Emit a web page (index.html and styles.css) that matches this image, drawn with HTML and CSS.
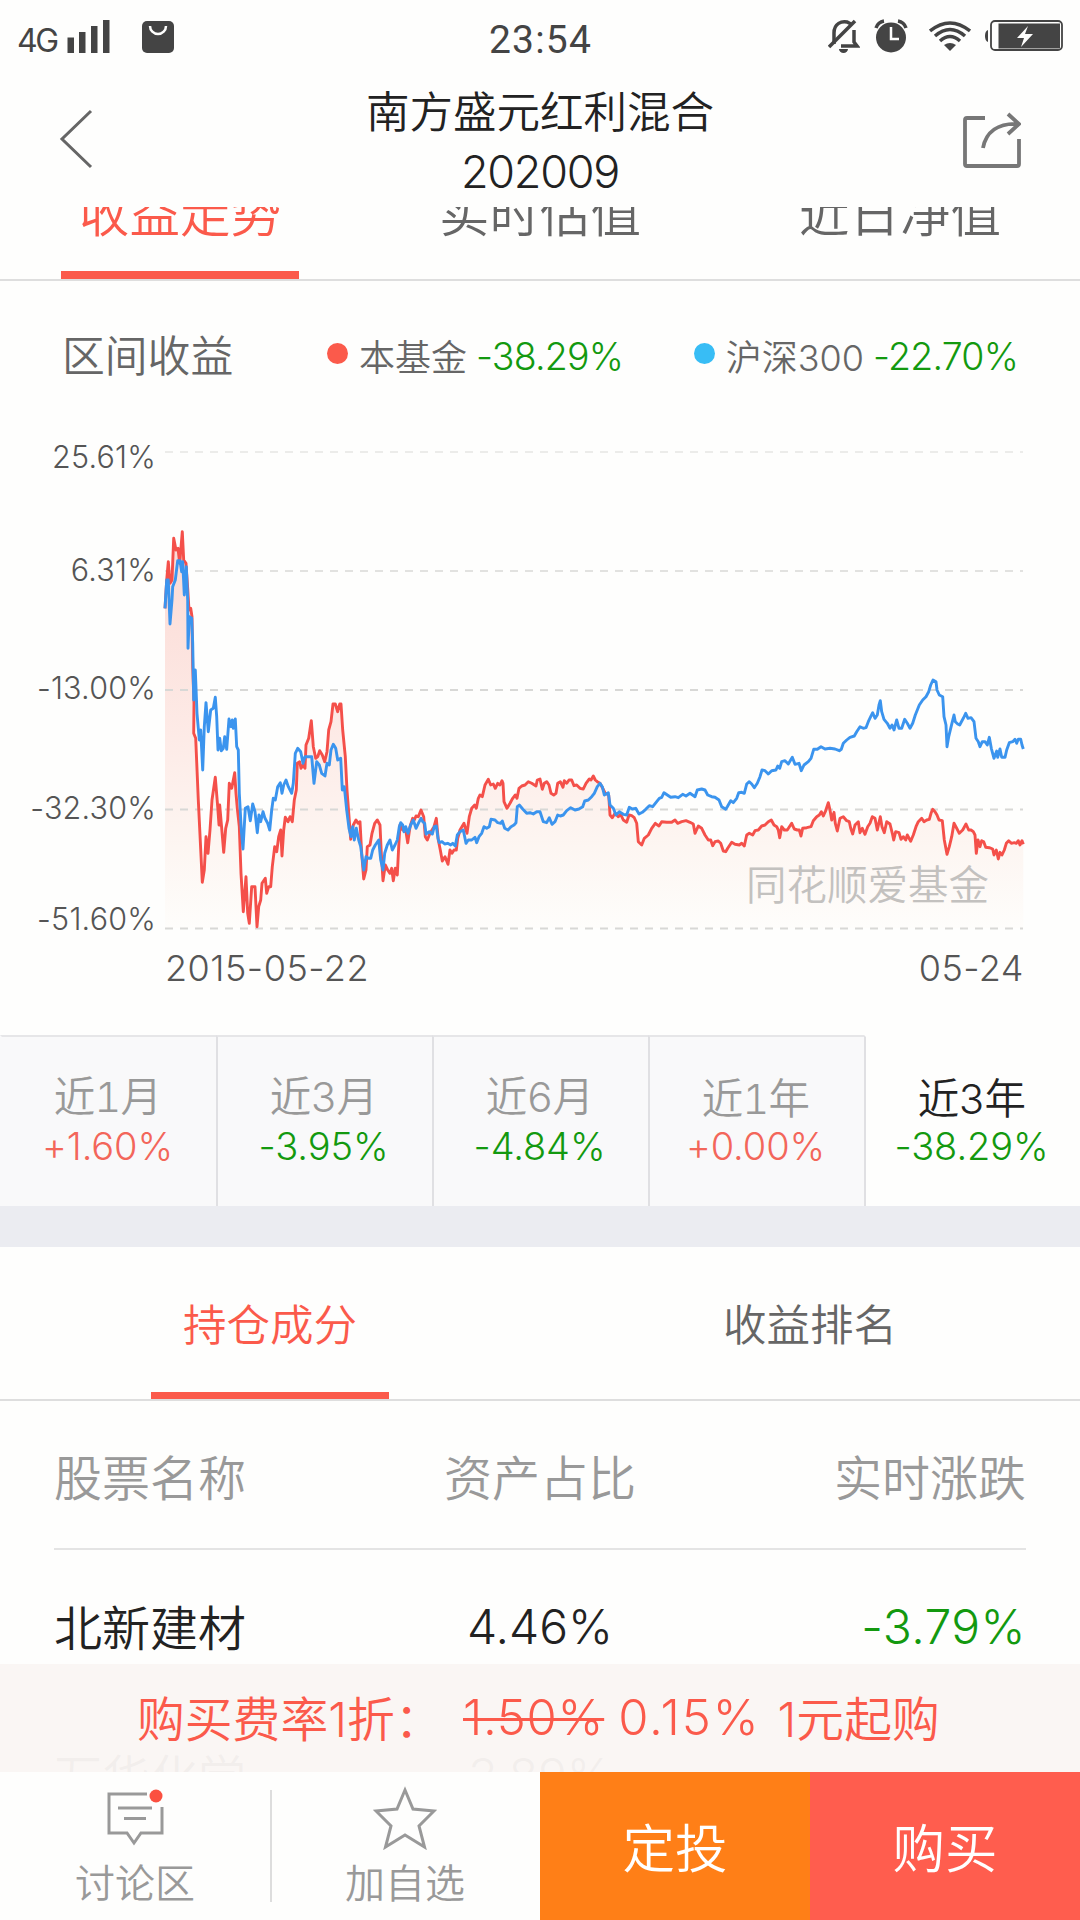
FILE: index.html
```html
<!DOCTYPE html>
<html lang="zh-CN">
<head>
<meta charset="utf-8">
<title>南方盛元红利混合</title>
<link rel="stylesheet" href="styles.css">
</head>
<body>
<div class="app">
  <header class="top">
    <div class="status">
      <div class="status-left">
        <span class="net">4G</span>
        <svg class="signal" width="44" height="34" viewBox="0 0 44 34"><path d="M0.5 18.500h6.500v15.500H0.500zM12 13h6.500v21H12zM24 7h6.500v27H24zM36 1h6.500v33H36z"/></svg>
        <svg class="bag" width="32" height="32" viewBox="0 0 32 32"><rect width="32" height="32" rx="5"/><path class="knock" d="M8 5a8 8 0 0 0 16 0"/></svg>
      </div>
      <span class="clock">23:54</span>
      <div class="status-right">
        <svg width="32" height="34" viewBox="0 0 32 34"><g class="line"><path d="M6 25V14C6 4 14 2 19 3l4 2M26 11v12l3 4H13"/><path d="M1 28 27 2"/></g><path d="M11 30h9a4.500 4 0 0 1-9 0z"/></svg>
        <svg width="36" height="34" viewBox="0 0 36 34"><circle cx="18" cy="18.500" r="15"/><path class="line" d="M3 9Q5 3 11 2M33 9Q31 3 25 2"/><path class="knock" d="M18 8v12h8"/></svg>
        <svg width="42" height="32" viewBox="0 0 42 32"><path class="line" d="M1 11Q21-5 41 11M6 16Q21 3 36 16M11 21Q21 12 31 21"/><path d="M15 25q6-4 12 0l-6 6z"/></svg>
        <svg width="79" height="32" viewBox="0 0 79 32"><path d="M3 10v12q-3-1-3-6t3-6z"/><rect class="shell" x="6" y="1" width="71" height="29" rx="4"/><rect x="13.500" y="3.500" width="61.500" height="25"/><path class="bolt" d="M43 6 32 18h7l-3 9 12-13h-8z"/></svg>
      </div>
    </div>
    <div class="titlebar">
      <svg class="back" width="36" height="60" viewBox="0 0 36 60"><path d="M32 2 3 30 32 58"/></svg>
      <h1 class="title">南方盛元红利混合<span class="code">202009</span></h1>
      <svg class="share" width="60" height="60" viewBox="0 0 60 60"><path d="M24 7H6Q4 7 4 9V53Q4 55 6 55H56Q58 55 58 53V28"/><path d="M22 37C25 21 37 12 57 13M47 3 58 13 47 23"/></svg>
    </div>
  </header>

  <nav class="tabs">
    <span class="tab active">收益走势</span><span class="tab">实时估值</span><span class="tab">近日净值</span>
  </nav>

  <section class="legend">
    <span class="legend-title">区间收益</span>
    <span class="item"><i class="dot fund"></i><span class="name">本基金</span><span class="down">-38.29%</span></span>
    <span class="item"><i class="dot index"></i><span class="name">沪深300</span><span class="down">-22.70%</span></span>
  </section>

  <svg class="chart" viewBox="0 420 1080 600" width="1080" height="600">
    <defs><linearGradient id="fade" gradientUnits="userSpaceOnUse" x1="0" y1="530" x2="0" y2="928">
      <stop offset="0" stop-color="#fbd9d3"/><stop offset=".5" stop-color="#fdeae6"/><stop offset=".8" stop-color="#fdf6f2"/><stop offset="1" stop-color="#fefdfb"/>
    </linearGradient></defs>
    <path id="area" fill="url(#fade)"/>
    <g class="grid"><path class="faint" d="M165 452H1023"/><path class="soft" d="M165 571H1023"/><path d="M165 690H1023M165 809.500H1023M165 928.500H1023"/></g>
    <path id="fund" class="series fund-line"/>
    <path id="index" class="series index-line"/>
    <g class="axis">
      <text x="156" y="468">25.61%</text>
      <text x="156" y="580.500">6.31%</text>
      <text x="156" y="699">-13.00%</text>
      <text x="156" y="819">-32.30%</text>
      <text x="156" y="929.500">-51.60%</text>
    </g>
    <text class="watermark" x="746" y="900">同花顺爱基金</text>
    <g class="dates">
      <text x="165" y="981">2015-05-22</text>
      <text class="end" x="1024" y="981">05-24</text>
    </g>
  </svg>

  <section class="periods">
    <div class="period"><b>近1月</b><span class="up">+1.60%</span></div>
    <div class="period"><b>近3月</b><span class="down">-3.95%</span></div>
    <div class="period"><b>近6月</b><span class="down">-4.84%</span></div>
    <div class="period year"><b>近1年</b><span class="up">+0.00%</span></div>
    <div class="period year selected"><b>近3年</b><span class="down">-38.29%</span></div>
  </section>

  <nav class="subtabs">
    <span class="subtab active">持仓成分</span><span class="subtab">收益排名</span>
  </nav>

  <section class="holdings">
    <div class="row head"><span>股票名称</span><span>资产占比</span><span>实时涨跌</span></div>
    <div class="row"><span>北新建材</span><span class="num">4.46%</span><span class="num down">-3.79%</span></div>
    <div class="row"><span>万华化学</span><span class="num">3.89%</span><span></span></div>
  </section>

  <footer class="bottom">
    <div class="promo"><span class="rate">购买费率1折：</span><s>1.50%</s><span class="now">0.15%</span><span>1元起购</span></div>
    <div class="actions">
      <div class="action">
        <svg width="60" height="60" viewBox="0 0 60 60"><path d="M42 8H4V47H22L29 57 36 47H57V21M13 22H47M19 32.500H41"/><circle cx="51" cy="10" r="6.500"/></svg>
        <span>讨论区</span>
      </div>
      <div class="action">
        <svg width="64" height="64" viewBox="0 0 64 64"><path d="M32 4 40 23 61 25 46 40 51.500 61 32 49 12.500 61 18 40 3 25 24 23Z"/></svg>
        <span>加自选</span>
      </div>
      <div class="button invest">定投</div>
      <div class="button buy">购买</div>
    </div>
  </footer>
</div>
<script src="chart.js"></script>
</body>
</html>
```
FILE: styles.css
```css
* { box-sizing: border-box; }
body { margin: 0; background: #fefefd; }
.app {
  width: 1080px; height: 1920px; overflow: hidden; position: relative;
  display: flex; flex-direction: column;
  background: #fefefd; color: #666;
  font-family: Inter, "Noto Sans CJK SC", sans-serif; font-weight: 350;
}
.up { color: #f3665a; }
.down { color: #13990f; }

/* Status and title */
.top { height: 207px; flex: none; background: #fefefd; z-index: 1; }
.status { height: 75px; padding: 0 16px 0 17px; display: grid; grid-template-columns: 1fr auto 1fr; align-items: center; color: #444; fill: #444; }
.status-left, .status-right { display: flex; align-items: center; }
.net { font-size: 32px; font-weight: 400; letter-spacing: -2.500px; width: 50px; padding-top: 5px; }
.signal { margin-top: -3px; }
.bag { margin: -1px 0 0 31px; }
.clock { font-family: Roboto, sans-serif; font-size: 39px; font-weight: 400; letter-spacing: 1.200px; padding-top: 5px; }
.status-right { justify-content: flex-end; gap: 14px; margin-top: -3px; }
.status-right svg:nth-child(2) { margin-left: -1px; margin-right: 6px; }
.line { fill: none; stroke: #444; stroke-width: 3.500; }
.knock { fill: none; stroke: #fefefd; stroke-width: 2.500; }
.shell { fill: none; stroke: #444; stroke-width: 1.800; }
.bolt { fill: #fefefd; }
.titlebar { display: flex; justify-content: space-between; padding: 6px 59px 0 59px; }
.back { margin-top: 28px; fill: none; stroke: #666; stroke-width: 3; }
.share { margin-top: 30px; fill: none; stroke: #777; stroke-width: 3.800; }
.title { margin: 0; padding: 1px 0 0 24px; font-size: 43.500px; font-weight: 350; line-height: 60px; color: #222; text-align: center; }
.code { display: block; font-size: 45px; font-weight: 300; letter-spacing: -1.300px; line-height: 60px; }

/* Chart section */
.tabs { height: 74px; flex: none; display: grid; grid-template-columns: repeat(3, 1fr); overflow: hidden; border-bottom: 2px solid #dedede; }
.tab { justify-self: center; width: 238px; height: 90px; margin-top: -18px; font-size: 50.500px; line-height: 50px; text-align: center; }
.tab.active, .subtab.active { color: #fb5a4b; border-bottom: 8px solid #fb5a4b; }
.legend { height: 139px; flex: none; padding: 9px 62px 0 62px; display: flex; align-items: center; }
.legend-title { width: 265px; font-size: 42.800px; margin-top: -5px; }
.item { display: flex; align-items: center; font-size: 36px; }
.item:last-child { margin-left: auto; }
.item .down { font-size: 37.500px; letter-spacing: -.8px; margin: 4px 0 0 9px; line-height: 50px; }
.dot { width: 21px; height: 21px; border-radius: 50%; margin: -3px 11px 0 0; }
.dot.fund { background: #fb5a4b; }
.dot.index { background: #38bdf5; }
.chart { flex: none; display: block; }
.grid { fill: none; stroke: #d8d8d6; stroke-width: 2; stroke-dasharray: 8 7; }
.faint { stroke: #ececea; }
.soft { stroke: #e2e2e0; }
.series { fill: none; stroke-width: 2.900; stroke-linejoin: round; }
.fund-line { stroke: #f4504a; }
.index-line { stroke: #3b94ee; }
.axis { font-size: 30.500px; font-weight: 300; letter-spacing: .2px; text-anchor: end; fill: #555; }
.watermark { font-size: 40.500px; fill: #c3c1bf; }
.dates { font-size: 36px; font-weight: 300; letter-spacing: .5px; fill: #555; }
.dates .end { text-anchor: end; }

/* Periods */
.periods { height: 212px; flex: none; margin-top: 15px; display: grid; grid-template-columns: repeat(5, 216px); border-bottom: 41px solid #ebecf1; }
.period { display: flex; flex-direction: column; align-items: center; padding: 36px 3px 0 0; background: #f9f9fa; border-top: 2px solid #e6e6e8; border-left: 2px solid #e0e0e3; color: #999; font-size: 38px; letter-spacing: -.1px; line-height: 49px; }
.period:first-child { border-left-color: transparent; }
.period b { font-size: 41.500px; font-weight: 350; letter-spacing: -.7px; line-height: 49px; font-variant-numeric: tabular-nums; }
.period.year { padding-top: 39px; }
.period.year b { line-height: 46px; }
.period.selected { background: none; border-top-color: transparent; }
.period.selected b { color: #222; }

/* Holdings */
.subtabs { height: 154px; flex: none; display: grid; grid-template-columns: 1fr 1fr; border-bottom: 2px solid #dedede; }
.subtab { justify-self: center; width: 238px; height: 152px; padding-top: 48px; font-size: 43.500px; line-height: 60px; text-align: center; }
.subtab.active { border-bottom-width: 7px; }
.holdings { padding: 0 54px; }
.row { height: 149px; display: grid; grid-template-columns: 1fr 1fr 1fr; align-items: center; font-size: 48px; color: #222; }
.row > :nth-child(2) { text-align: center; }
.row > :nth-child(3) { text-align: right; }
.row.head { padding-top: 1px; color: #999; border-bottom: 2px solid #e4e4e4; }
.row .num { padding-top: 3px; }
.row .num.down { color: #13990f; letter-spacing: .4px; }

/* Purchase bar */
.bottom { position: absolute; left: 0; right: 0; bottom: 0; }
.promo { height: 108px; display: flex; align-items: center; padding: 0 0 4px 137px; background: rgba(250, 246, 244, .965); color: #fb5a4b; font-size: 47.800px; }
.rate { width: 326px; white-space: nowrap; }
.promo s, .now { padding-top: 3px; font-size: 49px; letter-spacing: .7px; text-decoration-thickness: 3px; }
.now { margin: 0 17px 0 14px; letter-spacing: 1.900px; }
.actions { height: 148px; display: grid; grid-template-columns: repeat(4, 270px); background: #fefefd; }
.action { display: flex; flex-direction: column; align-items: center; justify-content: space-between; padding: 14px 0 8px; font-size: 40px; line-height: 56px; color: #999; }
.action svg { fill: none; stroke: #999; stroke-width: 3; }
.action circle { fill: #fb5040; stroke: none; }
.action + .action { background: linear-gradient(#ddd, #ddd) 0 18px / 2px 112px no-repeat; }
.button { display: grid; place-items: center; padding-bottom: 3px; color: #fff; font-size: 52.500px; }
.invest { background: #ff7f17; }
.buy { background: #ff5d4e; }
```
FILE: chart.js
```js
// Each batch holds points in thirds of a pixel, counted from its own origin.
const fund = [
  [150, 500, '45,325 50,240 55,185 60,250 66,240 71,115 78,150 84,145 89,190 97,95 101,180 108,190 113,265 117,330 122,325 126,350 128,500 132,610 131,700 137,715 145,900 157,1147 163,1110 168,1010 174,1060 180,990 186,900 196,832 203,920 207,975 209,915 215,985 221,1057 227,985 233,960 238,850 245,865 254,818 258,880 262,925 268,980 273,1120 280,1235 288,1130 293,1240 298,1270 305,1160 315,1160 321,1280 326,1220 332,1200 336,1150 346,1135 350,1180 356,1160 362,1160 367,1100 374,1040 380,1055 386,1010 392,990 396,1068 401,990 406,952 414,965 420,950 427,965 433,900 439,870 442,790 449,785 453,805 459,795 465,805 468,735 476,715 484,662 490,740 497,775 503,770 509,752 517,765 524,785 531,755 536,690 543,665 549,612 556,612 563,635 569,612 573,612 578,690 586,770 591,870 597,950 602,1018 610,975 618,960 624,970 630,965 635,1060 641,1137 648,1110 652,1040 660,1035 666,1000 674,970 682,960 690,975 694,1060 699,1142 706,1095 713,1110 720,1120 725,1105 730,1142 736,1105 742,1125 746,1040'],
  [380, 660, '60,495 68,510 77,510 83,548 90,500 98,475 103,480 108,468 115,470 123,450 131,470 136,530 142,540 150,520 156,510 162,500 169,475 175,540 181,570 187,603 195,590 204,613 210,570 216,580 222,570 229,570 233,535 240,510 252,490 261,520 268,470 275,445 284,435 289,445 295,415 300,405 307,410 315,375 325,358 332,375 340,372 346,385 353,370 360,375 366,362 369,370 372,425 381,445 390,430 398,415 406,405 411,415 417,385 425,378 435,375 445,365 455,370 468,378 472,360 480,357 487,388 493,370 500,365 507,375 513,400 521,405 528,400 533,370 541,365 549,382 553,362 560,370 567,360 575,360 582,377 590,375 600,385 610,387 618,370 628,357 633,360 640,348 646,360 652,365 660,370 668,385 676,400 686,405 690,465 697,473 705,460 715,470 722,463 730,480 740,487 747,465 755,467 763,473 770,490 775,545 785,555 793,535 805,525 815,505 826,490 837,498 845,485 860,487 875,487 885,480 893,490 905,485 918,482 930,487 940,492 945,520 955,498 965,505 975,525 985,540 992,540 998,557 1005,545 1015,543 1022,550 1030,573 1037,575'],
  [700, 650, '83,595 95,577 105,583 118,585 125,580 133,588 140,555 148,550 158,555 165,542 175,540 185,528 195,525 205,515 214,510 222,525 230,530 235,540 239,563 245,530 253,540 262,540 275,520 283,537 292,540 298,540 303,558 308,535 320,533 333,530 340,512 350,500 358,495 364,485 370,498 376,485 385,458 390,480 395,510 402,487 406,520 412,543 420,505 430,500 440,512 448,515 452,535 458,552 465,525 475,515 480,548 487,535 495,553 503,530 510,520 517,500 525,505 532,540 541,500 546,530 553,548 560,515 570,522 577,550 581,570 587,545 597,548 603,568 610,560 617,570 622,555 632,574 640,555 648,530 655,515 665,505 672,515 680,510 688,508 693,490 698,478 705,485 711,495 717,510 727,512 733,570 741,613 748,590 755,560 762,520 770,535 778,550 788,540 798,522 806,540 813,540 820,545 825,555 829,610 834,570 840,590 845,572 851,575 857,592 868,593 878,597 882,615 889,600 895,627 900,607 906,615 913,600 919,580 926,572 934,580 943,578 949,580 955,572 960,585 966,572 970,583']
];
const index = [
  [150, 500, '45,325 50,240 55,240 60,372 66,300 68,260 76,240 83,182 90,182 95,215 98,185 103,285 109,200 113,300 114,445 118,350 125,355 128,430 131,600 136,510 141,640 148,720 152,690 158,810 163,680 168,608 175,695 182,630 190,625 196,592 200,650 204,750 209,715 214,752 220,745 224,710 230,748 237,657 243,680 247,660 250,685 256,657 260,740 265,750 268,880 274,990 279,1047 286,925 294,920 301,962 308,912 315,935 322,998 327,945 332,965 339,935 345,955 353,970 359,990 365,930 370,895 376,900 383,860 391,848 396,880 401,855 408,840 415,860 425,880 430,850 436,760 443,745 452,755 459,790 465,770 475,770 485,770 492,850 500,785 508,795 515,820 525,828 531,790 538,795 543,750 550,733 557,745 563,780 572,775 577,870 583,860 590,930 597,985 603,1010 608,980 613,1020 619,985 626,1020 632,1040 641,1110 648,1070 655,1075 662,1075 668,1050 676,1035 686,1020 692,1080 699,1110 704,1060 712,1035 720,1020 727,1050 735,1035 742,1020 748,980'],
  [380, 660, '62,488 68,495 72,515 77,500 84,520 92,495 100,480 108,505 116,488 123,475 128,485 134,490 138,522 148,515 157,522 163,500 169,498 174,535 178,548 186,545 194,552 203,550 212,555 218,550 226,558 232,525 240,515 250,510 258,550 265,540 275,540 285,532 290,548 297,530 305,520 312,500 320,505 328,500 333,478 345,480 353,488 362,490 367,483 374,505 384,510 393,500 402,495 408,488 412,440 418,435 428,447 440,460 450,458 460,462 470,455 480,455 490,485 500,488 508,473 516,493 525,485 533,465 541,468 550,465 560,452 572,443 585,450 597,447 608,440 614,423 625,420 635,410 643,400 652,380 660,370 667,380 673,405 685,398 690,435 700,445 708,465 718,455 730,463 740,465 748,442 757,447 767,445 777,462 787,457 797,448 808,437 818,440 826,430 838,415 845,412 852,398 862,405 872,412 885,410 895,413 908,403 918,408 930,400 945,410 952,390 965,387 975,390 983,405 995,410 1005,412 1017,420 1025,440 1037,448'],
  [700, 650, '82,470 92,452 100,458 110,445 116,428 125,427 133,430 140,402 148,395 155,402 163,413 172,400 180,380 186,360 195,362 205,372 215,362 228,360 233,348 239,355 245,335 255,332 265,342 277,322 285,343 297,340 304,362 312,345 325,335 333,325 341,298 352,298 363,290 375,297 390,295 405,297 418,302 424,298 430,280 440,270 450,262 463,258 470,245 480,230 490,235 498,233 505,215 512,200 518,188 525,205 532,195 537,165 541,152 545,185 552,208 562,220 570,235 576,225 582,240 590,210 597,235 605,235 614,208 622,220 630,235 638,220 646,195 658,165 668,150 678,140 686,125 692,105 699,90 708,95 711,120 718,135 728,140 732,200 738,225 741,290 746,260 752,235 762,195 766,215 773,222 779,225 790,205 797,190 804,205 813,203 822,215 828,265 835,275 840,290 847,275 855,275 862,285 868,262 874,295 882,325 890,303 893,322 900,297 905,322 915,322 920,300 928,278 938,275 945,268 950,280 955,268 962,268 966,285 970,297']
];
const line = batches => 'M' + batches.flatMap(([ox, oy, points]) =>
  points.split(' ').map(p => {
    const [x, y] = p.split(',').map(Number);
    return (ox + x / 3).toFixed(1) + ' ' + (oy + y / 3).toFixed(1);
  })).join('L');
document.getElementById('fund').setAttribute('d', line(fund));
document.getElementById('index').setAttribute('d', line(index));
document.getElementById('area').setAttribute('d', line(fund) + 'V928H165Z');
```
